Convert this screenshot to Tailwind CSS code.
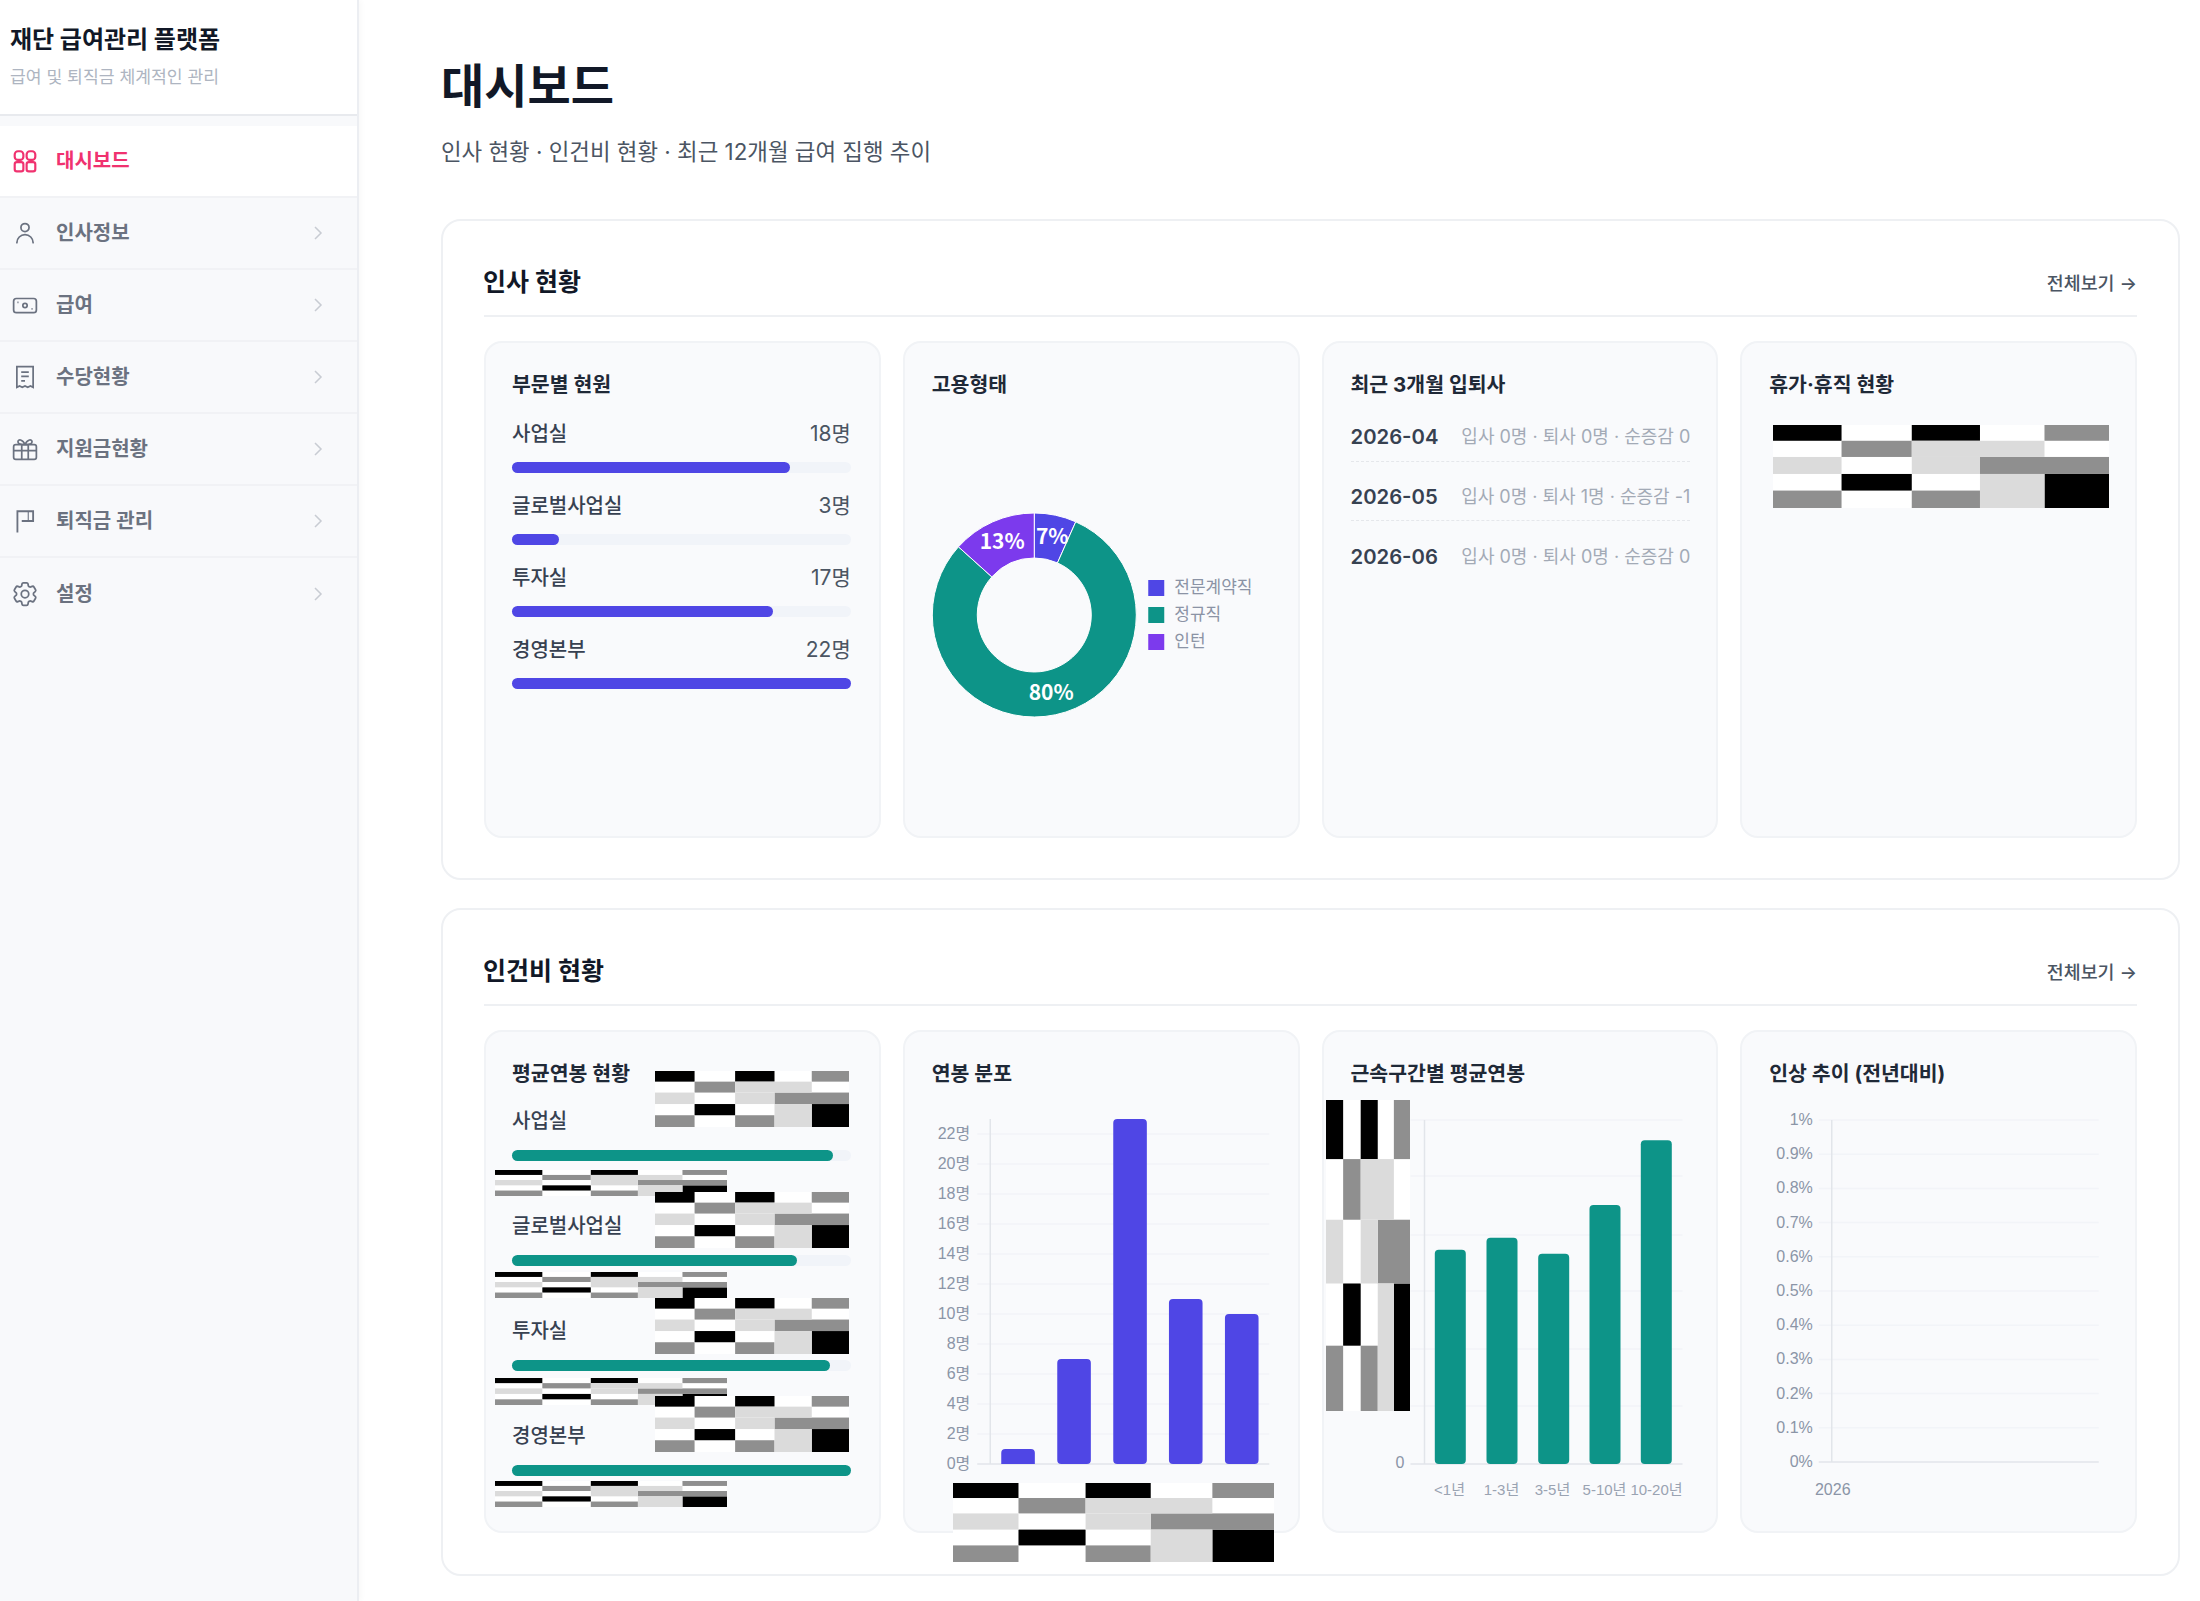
<!DOCTYPE html>
<html lang="ko">
<head>
  <meta charset="UTF-8">
  <title>재단 급여관리 플랫폼</title>
  <script src="https://cdn.jsdelivr.net/npm/@tailwindcss/browser@4"></script>
</head>
<body class="bg-white font-['Inter','Noto_Sans_CJK_KR',sans-serif] text-[#111827] overflow-hidden">
  <!-- mosaic used for redacted areas -->
  <svg class="absolute w-0 h-0">
    <symbol id="mosaic" viewBox="0 0 100 100" preserveAspectRatio="none">
      <rect width="100" height="100" fill="#fff"/>
      <g fill="#000">
        <rect x="0" y="0" width="20.4" height="19"/><rect x="41.3" y="0" width="20.3" height="19"/>
        <rect x="20.4" y="59" width="20.9" height="20"/><rect x="80.8" y="59" width="19.2" height="41"/>
      </g>
      <g fill="#8f8f8f">
        <rect x="80.8" y="0" width="19.2" height="19"/><rect x="20.4" y="19" width="20.9" height="19.5"/>
        <rect x="61.6" y="38.5" width="38.4" height="20.5"/><rect x="0" y="79" width="20.4" height="21"/><rect x="41.3" y="79" width="20.3" height="21"/>
      </g>
      <g fill="#dbdbdb">
        <rect x="41.3" y="19" width="39.5" height="19.5"/><rect x="0" y="38.5" width="20.4" height="20.5"/><rect x="41.3" y="38.5" width="20.3" height="20.5"/>
        <rect x="61.6" y="59" width="19.2" height="41"/>
      </g>
    </symbol>
  </svg>

  <div class="flex h-[1601px]">
    <!-- Sidebar -->
    <aside class="w-[359px] shrink-0 bg-[#f8f9fb] border-r-2 border-[#eceef2] shadow-[2px_0_6px_rgba(17,24,39,0.03)]">
      <div class="h-[116px] bg-white border-b-2 border-[#e8eaee] pl-[10px] pt-[22px]">
        <div class="text-[24px] leading-[36px] font-bold">재단 급여관리 플랫폼</div>
        <div class="text-[17.2px] leading-[26px] mt-[6px] text-[#aeb5c1]">급여 및 퇴직금 체계적인 관리</div>
      </div>
      <nav class="pt-[10px]">
        <a class="flex items-center h-[72px] bg-white border-b-2 border-[#f1f2f5] text-[#f0326f] font-bold text-[20px]">
          <span class="w-[56px] flex justify-center pr-[6px]">
            <svg class="w-[26px] h-[26px]" viewBox="0 0 24 24" fill="none" stroke="currentColor" stroke-width="2"><rect x="2.5" y="3" width="8" height="8" rx="3"/><rect x="13.5" y="3" width="8" height="8" rx="3"/><rect x="2.5" y="13" width="8" height="8.5" rx="2"/><rect x="13.5" y="13" width="8" height="8.5" rx="2"/></svg>
          </span>
          대시보드
        </a>
        <a class="flex items-center h-[72px] border-b-2 border-[#f1f2f5] text-[#6b7280] font-semibold text-[20px]">
          <span class="w-[56px] flex justify-center pr-[6px]">
            <svg class="w-[26px] h-[26px]" viewBox="0 0 24 24" fill="none" stroke="currentColor" stroke-width="1.6" stroke-linecap="round"><path d="M15.75 7a3.75 3.75 0 1 1-7.5 0 3.75 3.75 0 0 1 7.5 0ZM4.5 21a7.5 7.5 0 0 1 15 0"/></svg>
          </span>
          인사정보
          <svg class="ml-auto mr-[30px] w-[18px] h-[18px] text-[#c8ccd3]" viewBox="0 0 24 24" fill="none" stroke="currentColor" stroke-width="2"><path d="m8 4 8 8-8 8"/></svg>
        </a>
        <a class="flex items-center h-[72px] border-b-2 border-[#f1f2f5] text-[#6b7280] font-semibold text-[20px]">
          <span class="w-[56px] flex justify-center pr-[6px]">
            <svg class="w-[26px] h-[26px]" viewBox="0 0 24 24" fill="none" stroke="currentColor" stroke-width="1.6"><rect x="1.5" y="6" width="21" height="13" rx="2.5"/><circle cx="12" cy="12.5" r="2"/><path d="M5 9.5h1M18 15.5h1"/></svg>
          </span>
          급여
          <svg class="ml-auto mr-[30px] w-[18px] h-[18px] text-[#c8ccd3]" viewBox="0 0 24 24" fill="none" stroke="currentColor" stroke-width="2"><path d="m8 4 8 8-8 8"/></svg>
        </a>
        <a class="flex items-center h-[72px] border-b-2 border-[#f1f2f5] text-[#6b7280] font-semibold text-[20px]">
          <span class="w-[56px] flex justify-center pr-[6px]">
            <svg class="w-[26px] h-[26px]" viewBox="0 0 24 24" fill="none" stroke="currentColor" stroke-width="1.6"><path d="M4.5 2.5h15v19l-2.5-1.3-2.5 1.3-2.5-1.3-2.5 1.3-2.5-1.3-2.5 1.3z"/><path d="M8.5 7.5h7M8.5 11.5h7M8.5 15.5h3.5"/></svg>
          </span>
          수당현황
          <svg class="ml-auto mr-[30px] w-[18px] h-[18px] text-[#c8ccd3]" viewBox="0 0 24 24" fill="none" stroke="currentColor" stroke-width="2"><path d="m8 4 8 8-8 8"/></svg>
        </a>
        <a class="flex items-center h-[72px] border-b-2 border-[#f1f2f5] text-[#6b7280] font-semibold text-[20px]">
          <span class="w-[56px] flex justify-center pr-[6px]">
            <svg class="w-[26px] h-[26px]" viewBox="0 0 24 24" fill="none" stroke="currentColor" stroke-width="1.6"><rect x="1.5" y="8" width="21" height="13.5" rx="2"/><path d="M1.5 13.5h21M9 8v13.5M15 8v13.5M12 8C10 3 5.5 2.5 5.5 5.3 5.5 7.3 9 8 12 8Zm0 0c2-5 6.500-5.500 6.500-2.700C18.500 7.300 15 8 12 8Z"/></svg>
          </span>
          지원금현황
          <svg class="ml-auto mr-[30px] w-[18px] h-[18px] text-[#c8ccd3]" viewBox="0 0 24 24" fill="none" stroke="currentColor" stroke-width="2"><path d="m8 4 8 8-8 8"/></svg>
        </a>
        <a class="flex items-center h-[72px] border-b-2 border-[#f1f2f5] text-[#6b7280] font-semibold text-[20px]">
          <span class="w-[56px] flex justify-center pr-[6px]">
            <svg class="w-[26px] h-[26px]" viewBox="0 0 24 24" fill="none" stroke="currentColor" stroke-width="1.7"><path d="M5 22.500V3h14.500v9H9"/><path d="M15 3v9" stroke-width="1"/></svg>
          </span>
          퇴직금 관리
          <svg class="ml-auto mr-[30px] w-[18px] h-[18px] text-[#c8ccd3]" viewBox="0 0 24 24" fill="none" stroke="currentColor" stroke-width="2"><path d="m8 4 8 8-8 8"/></svg>
        </a>
        <a class="flex items-center h-[72px] text-[#6b7280] font-semibold text-[20px]">
          <span class="w-[56px] flex justify-center pr-[6px]">
            <svg class="w-[30px] h-[30px]" viewBox="0 0 24 24" fill="none" stroke="currentColor" stroke-width="1.4"><path d="M9.594 3.94c.09-.542.56-.94 1.11-.94h2.593c.55 0 1.02.398 1.11.94l.213 1.281c.063.374.313.686.645.87.074.04.147.083.22.127.325.196.72.257 1.075.124l1.217-.456a1.125 1.125 0 0 1 1.37.49l1.296 2.247a1.125 1.125 0 0 1-.26 1.431l-1.003.827c-.293.241-.438.613-.43.992a7.723 7.723 0 0 1 0 .255c-.008.378.137.75.43.991l1.004.827c.424.35.534.955.26 1.43l-1.298 2.247a1.125 1.125 0 0 1-1.369.491l-1.217-.456c-.355-.133-.75-.072-1.076.124a6.47 6.47 0 0 1-.22.128c-.331.183-.581.495-.644.869l-.213 1.281c-.09.543-.56.94-1.11.94h-2.594c-.55 0-1.019-.398-1.11-.94l-.213-1.281c-.062-.374-.312-.686-.644-.87a6.52 6.52 0 0 1-.22-.127c-.325-.196-.72-.257-1.076-.124l-1.217.456a1.125 1.125 0 0 1-1.369-.49l-1.297-2.247a1.125 1.125 0 0 1 .26-1.431l1.004-.827c.292-.24.437-.613.43-.991a6.932 6.932 0 0 1 0-.255c.007-.38-.138-.751-.43-.992l-1.004-.827a1.125 1.125 0 0 1-.26-1.43l1.297-2.247a1.125 1.125 0 0 1 1.37-.491l1.216.456c.356.133.751.072 1.076-.124.072-.044.146-.086.22-.128.332-.183.582-.495.644-.869l.214-1.28Z"/><path d="M15 12a3 3 0 1 1-6 0 3 3 0 0 1 6 0Z"/></svg>
          </span>
          설정
          <svg class="ml-auto mr-[30px] w-[18px] h-[18px] text-[#c8ccd3]" viewBox="0 0 24 24" fill="none" stroke="currentColor" stroke-width="2"><path d="m8 4 8 8-8 8"/></svg>
        </a>
      </nav>
    </aside>

    <!-- Main Content -->
    <main class="flex-1 pl-[82px] pr-[20px]">
      <h1 class="mt-[55px] text-[47px] leading-[62px] font-bold">대시보드</h1>
      <p class="mt-[19px] text-[22.4px] leading-[32px] text-[#4b5563]">인사 현황 · 인건비 현황 · 최근 12개월 급여 집행 추이</p>

      <!-- 인사 현황 -->
      <section class="mt-[51px] h-[661px] border-2 border-[#eef0f3] rounded-[20px] px-[41px]">
        <div class="flex items-end justify-between h-[96px] pb-[15px] border-b-2 border-[#eef0f3]">
          <h2 class="text-[25px] leading-[36px] font-bold -ml-[1px]">인사 현황</h2>
          <a class="mb-[4px] text-[18.4px] leading-[26px] font-medium text-[#4b5563]">전체보기 →</a>
        </div>
        <div class="grid grid-cols-4 gap-[22px] mt-[24px]">
          <div class="relative h-[497px] bg-[#f9fafc] border-2 border-[#f1f3f6] rounded-[18px] pl-[26px] pr-[28px] pt-[27.5px]">
            <h3 class="text-[20.5px] leading-[28px] font-bold text-[#1f2937]">부문별 현원</h3>
            <div class="mt-[22.5px] flex justify-between text-[20px] leading-[26px] font-medium text-[#374151]"><span>사업실</span><span class="text-[21px] font-normal text-[#4b5563]">18명</span></div>
            <div class="mt-[14.5px] mb-[20.5px] h-[11px] rounded-full bg-[#f1f4f9]"><div class="h-full w-[82%] rounded-full bg-[#4f46e5]"></div></div>
            <div class="flex justify-between text-[20px] leading-[26px] font-medium text-[#374151]"><span>글로벌사업실</span><span class="text-[21px] font-normal text-[#4b5563]">3명</span></div>
            <div class="mt-[14.5px] mb-[20.5px] h-[11px] rounded-full bg-[#f1f4f9]"><div class="h-full w-[14%] rounded-full bg-[#4f46e5]"></div></div>
            <div class="flex justify-between text-[20px] leading-[26px] font-medium text-[#374151]"><span>투자실</span><span class="text-[21px] font-normal text-[#4b5563]">17명</span></div>
            <div class="mt-[14.5px] mb-[20.5px] h-[11px] rounded-full bg-[#f1f4f9]"><div class="h-full w-[77%] rounded-full bg-[#4f46e5]"></div></div>
            <div class="flex justify-between text-[20px] leading-[26px] font-medium text-[#374151]"><span>경영본부</span><span class="text-[21px] font-normal text-[#4b5563]">22명</span></div>
            <div class="mt-[14.5px] h-[11px] rounded-full bg-[#4f46e5]"></div>
          </div>

          <div class="relative h-[497px] bg-[#f9fafc] border-2 border-[#f1f3f6] rounded-[18px] pl-[27px] pr-[25px] pt-[27.5px]">
            <h3 class="text-[20.5px] leading-[28px] font-bold text-[#1f2937]">고용형태</h3>
            <svg class="block mt-[100.5px] w-[345px] h-[230px] overflow-visible" viewBox="931.75 499 345 230">
              <g stroke="#fff" stroke-width="1">
                <path fill="#4f46e5" d="M1034 513A102 102 0 0 1 1075.500 521.800L1057.200 562.900A57 57 0 0 0 1034 558Z"/>
                <path fill="#0d9488" d="M1075.500 521.800A102 102 0 1 1 958.200 546.800L991.600 576.900A57 57 0 1 0 1057.200 562.900Z"/>
                <path fill="#7c3aed" d="M958.200 546.800A102 102 0 0 1 1034 513L1034 558A57 57 0 0 0 991.600 576.900Z"/>
              </g>
              <g class="font-['Noto_Sans_CJK_KR',sans-serif]" fill="#fff" font-size="21" font-weight="700" text-anchor="middle">
                <text x="1002" y="549">13%</text>
                <text x="1052" y="544">7%</text>
                <text x="1051" y="700">80%</text>
              </g>
              <rect x="1148" y="580" width="16" height="16" fill="#4f46e5"/>
              <rect x="1148" y="607" width="16" height="16" fill="#0d9488"/>
              <rect x="1148" y="634" width="16" height="16" fill="#7c3aed"/>
              <g fill="#8b93a5" font-size="17">
                <text x="1174" y="593">전문계약직</text>
                <text x="1174" y="620">정규직</text>
                <text x="1174" y="647">인턴</text>
              </g>
            </svg>
          </div>

          <div class="relative h-[497px] bg-[#f9fafc] border-2 border-[#f1f3f6] rounded-[18px] pl-[27px] pr-[26px] pt-[27.5px]">
            <h3 class="text-[20.5px] leading-[28px] font-bold text-[#1f2937]">최근 3개월 입퇴사</h3>
            <div class="mt-[3.5px]">
              <div class="flex justify-between items-center pt-[22px] pb-[11px] border-b border-dashed border-[#e5e7eb]"><span class="text-[20.3px] leading-[26px] font-semibold text-[#374151]">2026-04</span><span class="text-[18px] leading-[26px] text-[#a3aab6]">입사 0명 · 퇴사 0명 · 순증감 0</span></div>
              <div class="flex justify-between items-center pt-[22px] pb-[10px] border-b border-dashed border-[#e5e7eb]"><span class="text-[20.3px] leading-[26px] font-semibold text-[#374151]">2026-05</span><span class="text-[18px] leading-[26px] text-[#a3aab6]">입사 0명 · 퇴사 1명 · 순증감 -1</span></div>
              <div class="flex justify-between items-center pt-[23px]"><span class="text-[20.3px] leading-[26px] font-semibold text-[#374151]">2026-06</span><span class="text-[18px] leading-[26px] text-[#a3aab6]">입사 0명 · 퇴사 0명 · 순증감 0</span></div>
            </div>
          </div>

          <div class="relative h-[497px] bg-[#f9fafc] border-2 border-[#f1f3f6] rounded-[18px] pl-[27px] pr-[26px] pt-[27.5px]">
            <h3 class="text-[20.5px] leading-[28px] font-bold text-[#1f2937]">휴가·휴직 현황</h3>
            <svg class="absolute left-[31px] top-[82px] w-[336px] h-[83px]"><use href="#mosaic" width="100%" height="100%"/></svg>
          </div>
        </div>
      </section>

      <!-- 인건비 현황 -->
      <section class="mt-[28px] h-[668px] border-2 border-[#eef0f3] rounded-[20px] px-[41px]">
        <div class="flex items-end justify-between h-[96px] pb-[15px] border-b-2 border-[#eef0f3]">
          <h2 class="text-[25px] leading-[36px] font-bold -ml-[1px]">인건비 현황</h2>
          <a class="mb-[4px] text-[18.4px] leading-[26px] font-medium text-[#4b5563]">전체보기 →</a>
        </div>
        <div class="grid grid-cols-4 gap-[22px] mt-[24px]">
          <div class="relative h-[503px] bg-[#f9fafc] border-2 border-[#f1f3f6] rounded-[18px] pl-[26px] pr-[28px] pt-[27.5px]">
            <h3 class="text-[20.5px] leading-[28px] font-bold text-[#1f2937]">평균연봉 현황</h3>
            <div class="mt-[20.5px] text-[20px] leading-[26px] font-medium text-[#374151]">사업실</div>
            <div class="mt-[16px] mb-[52px] h-[11px] rounded-full bg-[#f1f4f9]"><div class="h-full w-[94.700%] rounded-full bg-[#0d9488]"></div></div>
            <div class="text-[20px] leading-[26px] font-medium text-[#374151]">글로벌사업실</div>
            <div class="mt-[16px] mb-[52px] h-[11px] rounded-full bg-[#f1f4f9]"><div class="h-full w-[84%] rounded-full bg-[#0d9488]"></div></div>
            <div class="text-[20px] leading-[26px] font-medium text-[#374151]">투자실</div>
            <div class="mt-[16px] mb-[52px] h-[11px] rounded-full bg-[#f1f4f9]"><div class="h-full w-[94%] rounded-full bg-[#0d9488]"></div></div>
            <div class="text-[20px] leading-[26px] font-medium text-[#374151]">경영본부</div>
            <div class="mt-[16px] h-[11px] rounded-full bg-[#0d9488]"></div>
            <svg class="absolute left-[169px] top-[39px] w-[194px] h-[56px]"><use href="#mosaic" width="100%" height="100%"/></svg>
            <svg class="absolute left-[9px] top-[138px] w-[232px] h-[26px]"><use href="#mosaic" width="100%" height="100%"/></svg>
            <svg class="absolute left-[169px] top-[160px] w-[194px] h-[56px]"><use href="#mosaic" width="100%" height="100%"/></svg>
            <svg class="absolute left-[9px] top-[240px] w-[232px] h-[26px]"><use href="#mosaic" width="100%" height="100%"/></svg>
            <svg class="absolute left-[169px] top-[266px] w-[194px] h-[56px]"><use href="#mosaic" width="100%" height="100%"/></svg>
            <svg class="absolute left-[9px] top-[346px] w-[232px] h-[27px]"><use href="#mosaic" width="100%" height="100%"/></svg>
            <svg class="absolute left-[169px] top-[364px] w-[194px] h-[56px]"><use href="#mosaic" width="100%" height="100%"/></svg>
            <svg class="absolute left-[9px] top-[449px] w-[232px] h-[26px]"><use href="#mosaic" width="100%" height="100%"/></svg>
          </div>

          <div class="relative h-[503px] bg-[#f9fafc] border-2 border-[#f1f3f6] rounded-[18px] pl-[27px] pr-[25px] pt-[27.5px]">
            <h3 class="text-[20.5px] leading-[28px] font-bold text-[#1f2937]">연봉 분포</h3>
            <svg class="block mt-[21.5px] w-[345px] h-[380px] overflow-visible font-['Liberation_Sans','Noto_Sans_CJK_KR',sans-serif]" viewBox="931.75 1110 345 380">
              <g stroke="#f2f4f8" stroke-width="1.500">
                <path d="M977 1135H1269M977 1165H1269M977 1195H1269M977 1225H1269M977 1255H1269M977 1285H1269M977 1315H1269M977 1345H1269M977 1375H1269M977 1405H1269M977 1435H1269"/>
              </g>
              <path d="M990 1120V1465H1269M977 1465H990" fill="none" stroke="#e2e5ea" stroke-width="1.500"/>
              <g fill="#4f46e5">
                <path d="M1001 1465v-11a4 4 0 0 1 4-4h25.600a4 4 0 0 1 4 4v11z"/>
                <rect x="1057" y="1360" width="33.600" height="105" rx="4"/>
                <rect x="1113" y="1120" width="33.600" height="345" rx="4"/>
                <rect x="1168.700" y="1300" width="33.600" height="165" rx="4"/>
                <rect x="1224.700" y="1315" width="33.600" height="150" rx="4"/>
              </g>
              <g fill="#8b95a7" font-size="16" text-anchor="end">
                <text x="970" y="1140">22명</text><text x="970" y="1170">20명</text><text x="970" y="1200">18명</text><text x="970" y="1230">16명</text>
                <text x="970" y="1260">14명</text><text x="970" y="1290">12명</text><text x="970" y="1320">10명</text><text x="970" y="1350">8명</text>
                <text x="970" y="1380">6명</text><text x="970" y="1410">4명</text><text x="970" y="1440">2명</text><text x="970" y="1470">0명</text>
              </g>
            </svg>
            <svg class="absolute left-[48px] top-[451px] w-[321px] h-[79px]"><use href="#mosaic" width="100%" height="100%"/></svg>
          </div>

          <div class="relative h-[503px] bg-[#f9fafc] border-2 border-[#f1f3f6] rounded-[18px] pl-[27px] pr-[26px] pt-[27.5px]">
            <h3 class="text-[20.5px] leading-[28px] font-bold text-[#1f2937]">근속구간별 평균연봉</h3>
            <svg class="block mt-[21.5px] w-[345px] h-[390px] overflow-visible font-['Liberation_Sans','Noto_Sans_CJK_KR',sans-serif]" viewBox="1350.500 1110 345 390">
              <path d="M1410 1121H1682M1410 1177H1682M1410 1236H1682M1410 1292H1682M1410 1350H1682M1410 1407H1682" stroke="#f2f4f8" stroke-width="1.500"/>
              <path d="M1424 1121V1465H1682M1410 1465H1424" fill="none" stroke="#e2e5ea" stroke-width="1.500"/>
              <g fill="#0d9488">
                <rect x="1434.300" y="1250.700" width="31" height="214.300" rx="4"/>
                <rect x="1486" y="1238.700" width="31" height="226.300" rx="4"/>
                <rect x="1537.700" y="1254.700" width="31" height="210.300" rx="4"/>
                <rect x="1589" y="1206" width="31" height="259" rx="4"/>
                <rect x="1640.300" y="1141.300" width="31" height="323.700" rx="4"/>
              </g>
              <text x="1404" y="1469" fill="#8b95a7" font-size="16" text-anchor="end">0</text>
              <g fill="#9aa3b2" font-size="15" text-anchor="middle">
                <text x="1449" y="1496">&lt;1년</text><text x="1501" y="1496">1-3년</text><text x="1552" y="1496">3-5년</text><text x="1604" y="1496">5-10년</text><text x="1656" y="1496">10-20년</text>
              </g>
            </svg>
            <svg class="absolute left-[2.500px] top-[68px] w-[84px] h-[311px]"><use href="#mosaic" width="100%" height="100%"/></svg>
          </div>

          <div class="relative h-[503px] bg-[#f9fafc] border-2 border-[#f1f3f6] rounded-[18px] pl-[27px] pr-[26px] pt-[27.5px]">
            <h3 class="text-[20.5px] leading-[28px] font-bold text-[#1f2937]">인상 추이 (전년대비)</h3>
            <svg class="block mt-[21.5px] w-[345px] h-[390px] overflow-visible font-['Liberation_Sans','Noto_Sans_CJK_KR',sans-serif]" viewBox="1769.250 1110 345 390">
              <path d="M1819 1121H2099M1819 1155.200H2099M1819 1189.400H2099M1819 1223.600H2099M1819 1257.800H2099M1819 1292H2099M1819 1326.200H2099M1819 1360.400H2099M1819 1394.600H2099M1819 1428.800H2099" stroke="#f2f4f8" stroke-width="1.500"/>
              <path d="M1832 1121V1463H2099M1819 1463H1832" fill="none" stroke="#e2e5ea" stroke-width="1.500"/>
              <g fill="#8b95a7" font-size="16" text-anchor="end">
                <text x="1813" y="1126">1%</text><text x="1813" y="1160">0.9%</text><text x="1813" y="1194">0.8%</text><text x="1813" y="1229">0.7%</text>
                <text x="1813" y="1263">0.6%</text><text x="1813" y="1297">0.5%</text><text x="1813" y="1331">0.4%</text><text x="1813" y="1365">0.3%</text>
                <text x="1813" y="1400">0.2%</text><text x="1813" y="1434">0.1%</text><text x="1813" y="1468">0%</text>
              </g>
              <text x="1833" y="1496" fill="#8b95a7" font-size="16" text-anchor="middle">2026</text>
            </svg>
          </div>
        </div>
      </section>
    </main>
  </div>
</body>
</html>
